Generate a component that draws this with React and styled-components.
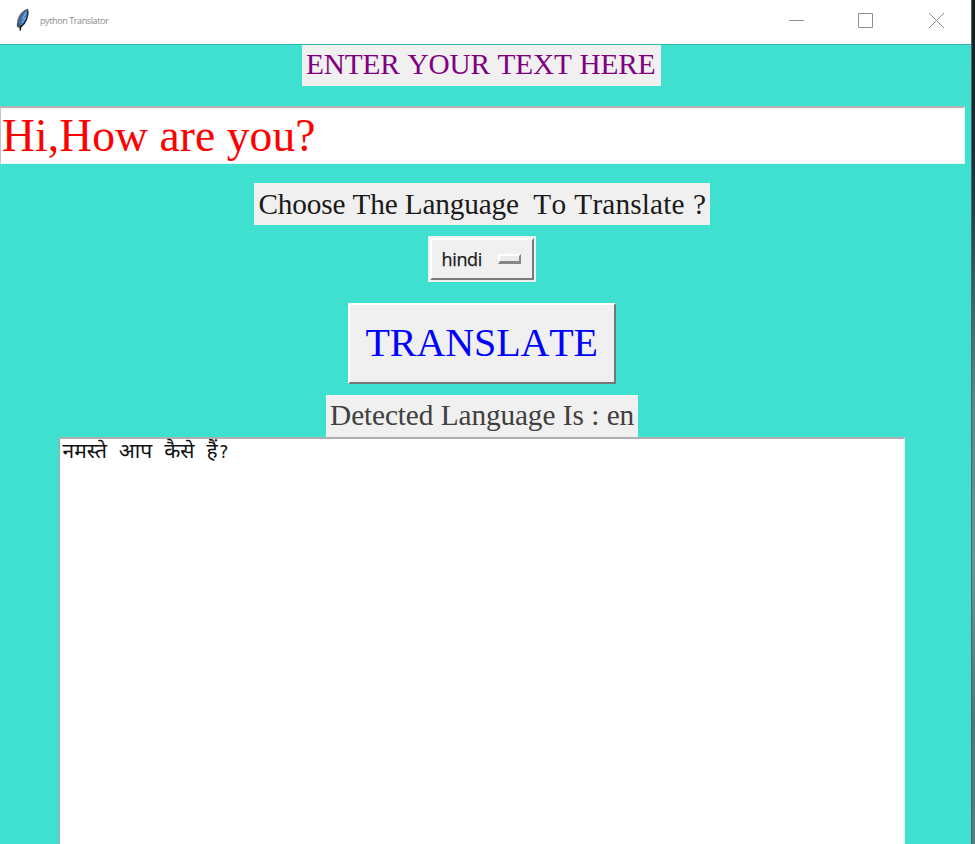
import React from 'react';
import styled, { createGlobalStyle } from 'styled-components';

const Global = createGlobalStyle`
  * { box-sizing: border-box; }
  body { margin: 0; background: #40e0d0; overflow: hidden; }
`;

const Screen = styled.div`
  display: flex;
  width: 975px;
  height: 844px;
  overflow: hidden;
`;

const Window = styled.div`
  width: 971px;
  display: flex;
  flex-direction: column;
  background: #40e0d0;
`;

const Backdrop = styled.div`
  width: 4px;
  border-left: 1px solid #4a6668;
  background: linear-gradient(#16201f 0, #1c2b33 150px, #2c4650 230px, #5d858c 400px, #6b959b 560px, #53737a 720px, #5b7a80 100%);
`;

const TitleBar = styled.header`
  height: 44px;
  flex: none;
  display: flex;
  align-items: flex-start;
  background: #fff;
`;

const Feather = styled.svg`
  width: 16px;
  height: 24px;
  margin: 8px 0 0 15px;
`;

const Title = styled.h1`
  margin: 14px auto 0 9px;
  font: 400 9px/14px 'Open Sans', sans-serif;
  letter-spacing: -0.4px;
  color: #8a8a8a;
`;

const Controls = styled.div`
  display: flex;
  gap: 54px;
  margin: 13px 27px 0 0;
`;

const Control = styled.svg`
  width: 15px;
  height: 15px;
  fill: none;
  stroke: #8f8f8f;

  &:last-child {
    margin-left: 2px;
  }
`;

const Form = styled.main`
  flex: 1;
  width: 963px;
  display: flex;
  flex-direction: column;
  align-items: center;
`;

const Rule = styled.div`
  height: 1px;
  flex: none;
  background: #32b8aa;
`;

const Label = styled.div`
  flex: none;
  width: ${(p) => p.$width}px;
  height: ${(p) => p.$height}px;
  margin-top: ${(p) => p.$top}px;
  padding-left: ${(p) => p.$pad}px;
  background: #f0f0f0;
  color: ${(p) => p.$color};
  font: 400 29.3px/${(p) => p.$line}px 'Liberation Serif', serif;
  font-kerning: none;
  letter-spacing: ${(p) => p.$spacing}px;
  word-spacing: ${(p) => p.$gap || 0}px;
  white-space: pre;
`;

const Tail = styled.span`
  letter-spacing: 0.15px;
  word-spacing: 0.7px;
`;

const Entry = styled.div`
  flex: none;
  align-self: flex-start;
  width: 965px;
  height: 58px;
  margin-top: 20px;
  padding-left: 1px;
  border-top: 2px solid #b4b4b4;
  border-left: 1px solid #c4c4c4;
  border-right: 1px solid #e3f9f6;
  border-bottom: 1px solid #e3f9f6;
  background: #fff;
  color: #f00;
  font: 400 45.5px/56px 'Liberation Serif', serif;
  font-kerning: none;
  letter-spacing: 0.1px;
  white-space: pre;
`;

const MenuFrame = styled.div`
  flex: none;
  width: 108px;
  height: 46px;
  margin-top: 11px;
  padding: 2px;
  background: #f0f0f0;
`;

const MenuButton = styled.button`
  display: flex;
  align-items: center;
  justify-content: space-between;
  width: 104px;
  height: 42px;
  padding: 0 11px 0 10px;
  border: 2px solid;
  border-color: #fff #7a7a7a #7a7a7a #fff;
  background: #f0f0f0;
  color: #1a1a1a;
  font: 400 18px/24px 'Open Sans', sans-serif;
  letter-spacing: -0.35px;
  -webkit-text-stroke: 0.25px #1a1a1a;
`;

const Indicator = styled.span`
  width: 23px;
  height: 10px;
  border: 2px solid;
  border-color: #fff #868686 #868686 #fff;
  border-bottom-width: 3px;
  background: #ececec;
`;

const TranslateButton = styled.button`
  flex: none;
  width: 268px;
  height: 81px;
  margin-top: 21px;
  padding: 0 0 3px 16px;
  text-align: left;
  border: 2px solid;
  border-color: #fff #767676 #767676 #fff;
  background: #f0f0f0;
  color: #00f;
  font: 400 40px/73px 'Liberation Serif', serif;
  font-kerning: none;
  letter-spacing: -0.1px;
`;

const Output = styled.div`
  flex: 1;
  width: 846px;
  padding: 0 0 0 3px;
  border-top: 2px solid #b0b0b0;
  border-left: 1px solid #a4a4a4;
  border-right: 1px solid #d4f7f3;
  background: #fff;
  color: #111;
  font: 400 21px/23px 'Noto Sans', 'Noto Sans Devanagari', sans-serif;
  word-spacing: 6.5px;
  white-space: pre;
`;

const Mark = styled.span`
  margin-left: 1px;
  font-family: 'DejaVu Sans Mono', monospace;
  font-size: 17px;
`;

export default function App() {
  return (
    <Screen>
      <Global />
      <Window>
        <TitleBar>
          <Feather viewBox="0 0 16 24">
            <path d="M2 19C1 11 5 3 13 0.8C14.5 6 12 15 6 19L4.5 20Z" fill="#4a4f57" />
            <path d="M3.8 17C4.5 9 8 4 12.5 2C13.5 7 10.5 15 5.5 18Z" fill="#3c78c0" />
            <path d="M7.5 11L11.5 4M7 15L11 9" stroke="#8dbbea" strokeWidth="1" />
            <path d="M2.5 15C3 9 6 4.5 9.5 2.8" stroke="#8d9298" fill="none" />
            <path d="M12.8 3C13.5 8 11 15 6.5 18.4" stroke="#20262e" strokeWidth="1.2" fill="none" />
            <path d="M5 22.5L6 17.5" stroke="#101418" strokeWidth="1.4" fill="none" />
          </Feather>
          <Title>python Translator</Title>
          <Controls>
            <Control><path d="M0 7.5H15" /></Control>
            <Control><path d="M.5.5h14v14H.5z" /></Control>
            <Control><path d="M0 0L15 15M15 0L0 15" /></Control>
          </Controls>
        </TitleBar>
        <Rule />
        <Form>
          <Label $width={359} $height={41} $top={0} $pad={4} $line={39} $color="#800080" $spacing={-0.15} $gap={0.6}>ENTER YOUR TEXT HERE</Label>
          <Entry>Hi,How are you?</Entry>
          <Label $width={456} $height={42} $top={19} $pad={5} $line={42} $color="#1a1a1a" $spacing={-0.2} $gap={0.2}>
            {'Choose The Language  '}
            <Tail>To Translate ?</Tail>
          </Label>
          <MenuFrame>
            <MenuButton>hindi<Indicator /></MenuButton>
          </MenuFrame>
          <TranslateButton>TRANSLATE</TranslateButton>
          <Label $width={312} $height={42} $top={11} $pad={4.6} $line={41} $color="#404040" $spacing={-0.12} $gap={0.3}>Detected Language Is : en</Label>
          <Output lang="hi">नमस्ते आप कैसे हैं<Mark>?</Mark></Output>
        </Form>
      </Window>
      <Backdrop />
    </Screen>
  );
}
